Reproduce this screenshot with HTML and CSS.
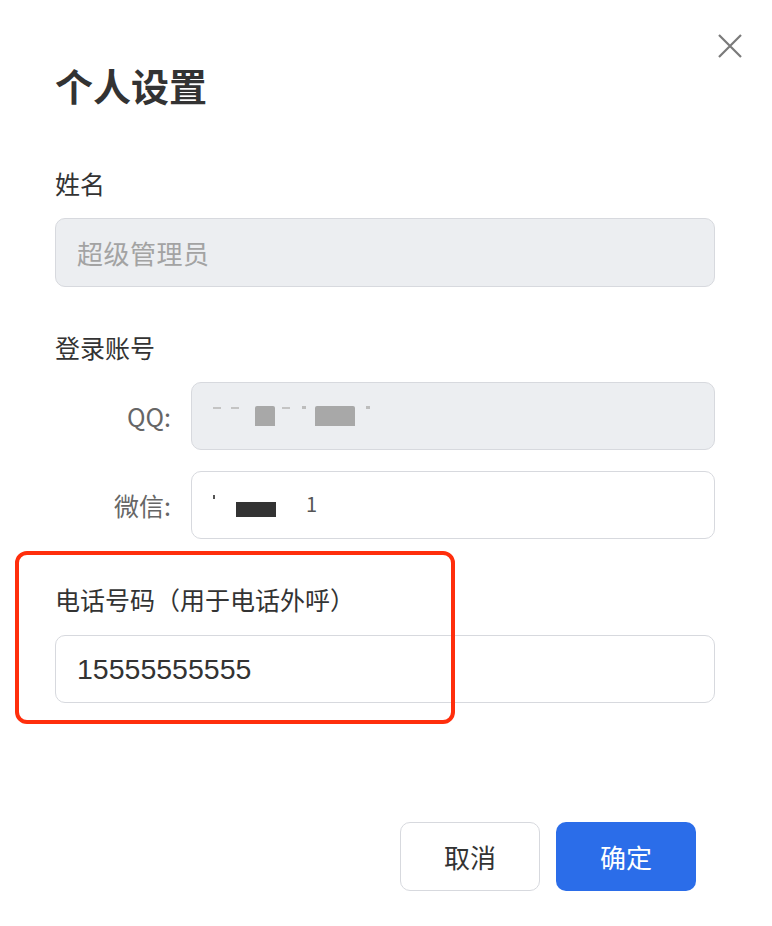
FILE: index.html
```html
<!DOCTYPE html>
<html>
<head>
    <title>个人设置</title>
    <link rel="stylesheet" href="styles.css">
</head>
<body>
    <div class="dialog">
        <button class="close-btn" aria-label="关闭">
            <svg width="24" height="24" viewBox="0 0 24 24">
                <path d="M1 1 L23 23 M23 1 L1 23" stroke="#7a7a7a" stroke-width="2.2" fill="none"/>
            </svg>
        </button>

        <h1 class="title">个人设置</h1>

        <div class="field-label name-label">姓名</div>
        <div class="input disabled">
            <span class="placeholder">超级管理员</span>
        </div>

        <div class="field-label account-label">登录账号</div>
        <div class="account-grid">
            <div class="row-label">QQ:</div>
            <div class="input disabled">
                <span class="masked qq-mask">
                    <i class="dash" style="margin-left:0"></i>
                    <i class="dash" style="margin-left:10px"></i>
                    <i class="blk light" style="margin-left:16px;width:20px"></i>
                    <i class="dash" style="margin-left:7px"></i>
                    <i class="dot" style="margin-left:12px"></i>
                    <i class="blk light" style="margin-left:9px;width:40px"></i>
                    <i class="dot" style="margin-left:11px"></i>
                </span>
            </div>

            <div class="row-label">微信:</div>
            <div class="input">
                <span class="masked wx-mask">
                    <i class="tick"></i>
                    <i class="blk dark"></i>
                    <i class="one">1</i>
                </span>
            </div>
        </div>

        <div class="phone-section">
            <div class="highlight"></div>
            <div class="field-label">电话号码（用于电话外呼）</div>
            <div class="input">
                <span class="value">15555555555</span>
            </div>
        </div>

        <div class="actions">
            <button class="btn btn-cancel">取消</button>
            <button class="btn btn-primary">确定</button>
        </div>
    </div>
</body>
</html>
```

FILE: styles.css
```css
body {
    margin: 0;
    background: #fff;
    font-family: "Noto Sans CJK SC", "Noto Sans", "Liberation Sans", sans-serif;
    color: #333;
}

.dialog {
    position: relative;
    width: 772px;
    height: 926px;
    box-sizing: border-box;
    padding: 64px 57px 0 55px;
    background: #fff;
}

.close-btn {
    position: absolute;
    top: 34px;
    right: 30px;
    width: 24px;
    height: 24px;
    padding: 0;
    border: none;
    background: none;
    cursor: pointer;
}

.close-btn svg {
    display: block;
}

.title {
    margin: 0;
    font-size: 38px;
    line-height: 42px;
    font-weight: bold;
    color: #333;
}

.field-label {
    font-size: 25px;
    line-height: 36px;
    color: #333;
    margin-bottom: 17px;
}

.name-label {
    margin-top: 59px;
}

.account-label {
    margin-top: 42px;
    margin-bottom: 17px;
}

.input {
    height: 69px;
    box-sizing: border-box;
    border: 1.5px solid #d7d9de;
    border-radius: 10px;
    background: #fff;
    display: flex;
    align-items: center;
    padding: 0 21px;
    font-size: 25px;
}

.input.disabled {
    background: #eceef1;
}

.placeholder {
    color: #a3a3a3;
    font-size: 26px;
    letter-spacing: 0.5px;
}

.value {
    color: #333;
    font-family: "Liberation Sans", "Noto Sans", sans-serif;
    font-size: 28.5px;
}

.account-grid {
    display: grid;
    grid-template-columns: 116px 1fr;
    column-gap: 20px;
    row-gap: 21px;
}

.account-grid .input {
    height: 68px;
}

.row-label {
    text-align: right;
    font-size: 25px;
    color: #666;
    align-self: center;
}

.masked {
    display: flex;
    align-items: flex-start;
    height: 24px;
}

.masked i {
    display: block;
    font-style: normal;
}

.dash {
    width: 8px;
    height: 2px;
    margin-top: 3px;
    background: #c4c4c4;
}

.dot {
    width: 4px;
    height: 3px;
    margin-top: 2px;
    background: #bdbdbd;
}

.blk.light {
    height: 20px;
    margin-top: 2px;
    background: #a8a8a8;
    border-radius: 2px 2px 0 0;
}

.tick {
    width: 2px;
    height: 4px;
    margin-top: 2px;
    background: #555;
}

.blk.dark {
    width: 40px;
    height: 15px;
    margin-left: 21px;
    margin-top: 9px;
    background: #333;
}

.one {
    margin-left: 30px;
    font-size: 20px;
    line-height: 18px;
    margin-top: 2px;
    color: #555;
}

.phone-section {
    position: relative;
    margin-top: 42px;
}

.phone-section .field-label {
    margin-bottom: 18px;
}

.phone-section .input {
    height: 68px;
}

.highlight {
    position: absolute;
    left: -40px;
    top: -30px;
    width: 440px;
    height: 173px;
    box-sizing: border-box;
    border: 4px solid #ff2e0c;
    border-radius: 12px;
    pointer-events: none;
    z-index: 2;
}

.actions {
    display: flex;
    justify-content: flex-end;
    gap: 16px;
    margin-top: 119px;
    margin-right: 19px;
}

.btn {
    width: 140px;
    height: 69px;
    border-radius: 10px;
    font-family: "Noto Sans CJK SC", sans-serif;
    font-size: 26px;
    cursor: pointer;
}

.btn-cancel {
    background: #fff;
    border: 1.5px solid #d7d9de;
    color: #333;
}

.btn-primary {
    background: #2b6de9;
    border: none;
    color: #fff;
}
```
